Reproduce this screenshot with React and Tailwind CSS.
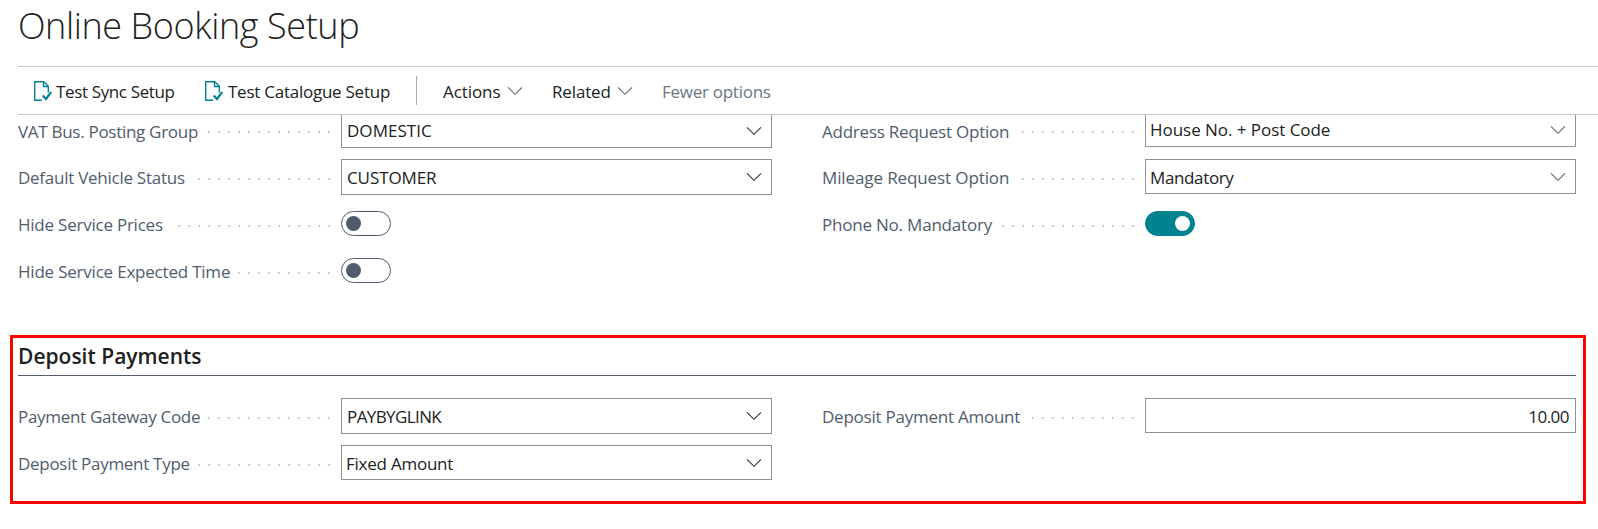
import React from "react";

const Chevron = ({ className = "" }) => (
  <svg viewBox="0 0 16 10" className={"h-[10px] w-4 shrink-0 " + className} fill="none" stroke="currentColor" strokeWidth="1.1">
    <path d="M1 1.3 8 8.3 15 1.3" />
  </svg>
);

const DocCheck = () => (
  <svg viewBox="0 0 18 20" className="mt-px h-5 w-[18px] shrink-0 text-[#00838f]" fill="none" stroke="currentColor" strokeWidth="1.4">
    <path d="M8 19.3H.7V.7H9.8L14.3 5.2V11.5" />
    <path d="M9.5.9v4.6h4.6" />
    <path d="M8.7 14.6 12 18l5.2-7" strokeWidth="2.2" />
  </svg>
);

const Field = ({ label, tracking, textPad = "pt-[2px]", children }) => (
  <div className="flex h-9 items-start gap-[10px]">
    <div className={"flex h-9 w-[313px] items-center " + textPad}>
      <span className={"mr-[8px] shrink-0 whitespace-nowrap text-[17px] leading-9 text-[#505c6d] " + tracking}>{label}</span>
      <span className="mt-px h-[2px] grow bg-[linear-gradient(90deg,transparent_7px,#cbcbcf_7px,#cbcbcf_9px,transparent_9px)] bg-[length:10px_2px] bg-right" />
    </div>
    {children}
  </div>
);

const Select = ({ value, tracking, size = "h-9 pl-[5px]", line = "leading-[34px] pt-px", chevron = "text-[#333]" }) => (
  <div className={"flex w-[431px] items-center justify-between border border-[#8b919c] bg-white pr-[9px] " + size}>
    <span className={"whitespace-nowrap text-[17px] text-[#212121] " + line + " " + tracking}>{value}</span>
    <Chevron className={chevron} />
  </div>
);

const Toggle = ({ on }) => (
  <div
    className={
      "mt-[5px] flex h-[25px] w-[50px] items-center rounded-full border px-1 " +
      (on ? "justify-end border-[#00838f] bg-[#00838f]" : "justify-start border-[#505c6d] bg-white")
    }
  >
    <span className={"size-[15px] rounded-full " + (on ? "bg-white" : "bg-[#505c6d]")} />
  </div>
);

export default function App() {
  return (
    <div className="h-[529px] w-[1598px] overflow-hidden bg-white font-['Open_Sans','Noto_Sans',sans-serif] text-[#212121]">
      <header className="h-[66px] pl-[18px]">
        <h1 className="text-[36px] font-light leading-[52px] tracking-[-0.4px]">Online Booking Setup</h1>
      </header>

      <nav className="ml-[18px] flex h-[49px] items-center border-y border-[#c8c9d0] pl-4 text-[17px] leading-6">
        <button className="flex items-center gap-[4px]">
          <DocCheck />
          <span className="w-[121px] whitespace-nowrap pt-[2px] text-left tracking-[-0.36px]">Test Sync Setup</span>
        </button>
        <button className="ml-[28px] flex items-center gap-[5px]">
          <DocCheck />
          <span className="w-[163px] whitespace-nowrap pt-[2px] text-left tracking-[-0.25px]">Test Catalogue Setup</span>
        </button>
        <span className="ml-[25px] h-[29px] w-px bg-[#a6abb5]" />
        <button className="ml-[26px] flex w-[80px] items-center justify-between">
          <span className="pt-[2px] tracking-[-0.08px]">Actions</span>
          <Chevron className="mt-px text-[#666]" />
        </button>
        <button className="ml-[29px] flex w-[81px] items-center justify-between">
          <span className="pt-[2px] tracking-[-0.15px]">Related</span>
          <Chevron className="mt-px text-[#666]" />
        </button>
        <button className="ml-[29px] whitespace-nowrap pt-[2px] tracking-[-0.27px] text-[#6b7685]">Fewer options</button>
      </nav>

      <main>
        <section className="flex h-[220px] gap-[50px] overflow-hidden pl-[18px]">
          <div className="-mt-[3px] flex w-[754px] flex-col gap-[11px]">
            <Field label="VAT Bus. Posting Group" tracking="tracking-[-0.29px]" textPad="pt-[3px]">
              <Select value="DOMESTIC" tracking="tracking-[0.04px]" line="leading-[34px] pt-[2px]" chevron="mt-[2px] text-[#333]" />
            </Field>
            <Field label="Default Vehicle Status" tracking="tracking-[-0.26px]">
              <Select value="CUSTOMER" tracking="tracking-[-0.09px]" />
            </Field>
            <Field label="Hide Service Prices" tracking="tracking-[-0.23px]">
              <Toggle />
            </Field>
            <Field label="Hide Service Expected Time" tracking="tracking-[-0.21px]">
              <Toggle />
            </Field>
          </div>
          <div className="-mt-[3px] flex w-[754px] flex-col gap-[11px]">
            <Field label="Address Request Option" tracking="tracking-[-0.23px]" textPad="pt-[3px]">
              <Select value="House No. + Post Code" tracking="tracking-[-0.04px]" size="h-[35px] pl-[4px]" chevron="mt-px text-[#666]" />
            </Field>
            <Field label="Mileage Request Option" tracking="tracking-[-0.11px]">
              <Select value="Mandatory" tracking="tracking-[-0.36px]" size="h-[35px] pl-[4px]" line="leading-[34px] pt-[2px]" chevron="text-[#666]" />
            </Field>
            <Field label="Phone No. Mandatory" tracking="tracking-[-0.21px]">
              <Toggle on />
            </Field>
          </div>
        </section>

        <section className="ml-[10px] h-[169px] w-[1576px] border-[3px] border-[#ff0000] pl-[5px]">
          <div className="h-[38px] w-[1558px] border-b border-[#505c6d]">
            <h2 className="text-[21px] font-semibold leading-[36px]">Deposit Payments</h2>
          </div>
          <div className="mt-[22px] flex gap-[50px]">
            <div className="flex w-[754px] flex-col gap-[11px]">
              <Field label="Payment Gateway Code" tracking="tracking-[-0.3px]">
                <Select value="PAYBYGLINK" tracking="tracking-[-0.6px]" />
              </Field>
              <Field label="Deposit Payment Type" tracking="tracking-[-0.29px]">
                <Select value="Fixed Amount" tracking="tracking-[-0.24px]" size="h-[35px] pl-[4px]" line="leading-[34px] pt-[2px]" chevron="mt-px text-[#333]" />
              </Field>
            </div>
            <div className="w-[754px]">
              <Field label="Deposit Payment Amount" tracking="tracking-[-0.24px]">
                <div className="h-[35px] w-[431px] border border-[#8b919c] pr-[6px] pt-px text-right text-[17px] leading-[34px] tracking-[-0.53px]">10.00</div>
              </Field>
            </div>
          </div>
        </section>
      </main>
    </div>
  );
}
